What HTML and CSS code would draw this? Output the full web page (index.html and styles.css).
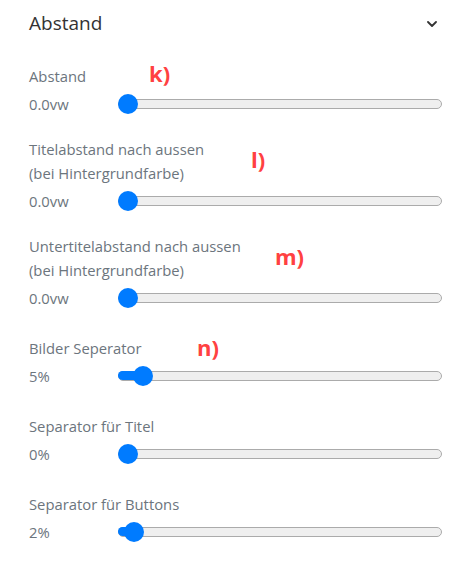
FILE: index.html
```html
<!DOCTYPE html>
<html lang="de">
<head>
<meta charset="utf-8">
<title>Abstand</title>
<link rel="stylesheet" href="styles.css">
</head>
<body>
<section class="panel">
  <header class="panel-header">
    <h2 class="panel-title">Abstand</h2>
    <svg class="chevron" viewBox="0 0 10 6" width="10" height="6"><polyline points="1,1 5,5 9,1" fill="none" stroke="#333" stroke-width="1.8" stroke-linecap="round" stroke-linejoin="round"/></svg>
  </header>
  <div class="groups">
    <div class="group">
      <div class="label">Abstand</div>
      <div class="row">
        <span class="value">0.0vw</span>
        <div class="slider"><div class="track"></div><div class="thumb" style="left:0px"></div></div>
      </div>
      <span class="mark mark-k">k)</span>
    </div>
    <div class="group">
      <div class="label">Titelabstand nach aussen<br>(bei Hintergrundfarbe)</div>
      <div class="row">
        <span class="value">0.0vw</span>
        <div class="slider"><div class="track"></div><div class="thumb" style="left:0px"></div></div>
      </div>
      <span class="mark mark-l">l)</span>
    </div>
    <div class="group">
      <div class="label">Untertitelabstand nach aussen<br>(bei Hintergrundfarbe)</div>
      <div class="row">
        <span class="value">0.0vw</span>
        <div class="slider"><div class="track"></div><div class="thumb" style="left:0px"></div></div>
      </div>
      <span class="mark mark-m">m)</span>
    </div>
    <div class="group group--spaced">
      <div class="label">Bilder Seperator</div>
      <div class="row">
        <span class="value">5%</span>
        <div class="slider"><div class="track"></div><div class="fill" style="width:25px"></div><div class="thumb" style="left:15px"></div></div>
      </div>
      <span class="mark mark-n">n)</span>
    </div>
    <div class="group group--spaced">
      <div class="label">Separator für Titel</div>
      <div class="row">
        <span class="value">0%</span>
        <div class="slider"><div class="track"></div><div class="thumb" style="left:0px"></div></div>
      </div>
    </div>
    <div class="group group--spaced">
      <div class="label">Separator für Buttons</div>
      <div class="row">
        <span class="value">2%</span>
        <div class="slider"><div class="track"></div><div class="fill" style="width:16px"></div><div class="thumb" style="left:6px"></div></div>
      </div>
    </div>
  </div>
</section>
</body>
</html>
```

FILE: styles.css
```css
body {
  margin: 0;
  background: #fff;
  font-family: "Open Sans", "Noto Sans", sans-serif;
}

.panel {
  padding: 8px 23px 0 29px;
}

.panel-header {
  display: flex;
  justify-content: space-between;
  align-items: center;
  height: 30px;
}

.panel-title {
  margin: 0;
  font-size: 19px;
  font-weight: 400;
  line-height: 30px;
  color: #333;
}

.chevron {
  margin-right: 5px;
  margin-top: 2px;
}

.groups {
  display: flex;
  flex-direction: column;
  gap: 21px;
  margin-top: 26px;
}

.group {
  position: relative;
  display: flex;
  flex-direction: column;
  gap: 4px;
}

.group--spaced {
  margin-top: 5px;
}

.label {
  font-size: 14.8px;
  line-height: 24px;
  color: #6c757d;
}

.row {
  display: flex;
  align-items: center;
  height: 24px;
}

.value {
  flex: none;
  width: 89px;
  font-size: 14.8px;
  color: #6c757d;
}

.slider {
  position: relative;
  flex: 1;
  height: 20px;
  display: flex;
  align-items: center;
}

.track {
  flex: 1;
  box-sizing: border-box;
  height: 10px;
  border: 1px solid #ababab;
  border-radius: 5px;
  background: #efefef;
}

.fill {
  position: absolute;
  left: 0;
  top: 5px;
  height: 9px;
  border-radius: 5px;
  background: #007bff;
}

.thumb {
  position: absolute;
  top: 0;
  width: 20px;
  height: 20px;
  border-radius: 50%;
  background: #007bff;
}

.mark {
  position: absolute;
  font-size: 22px;
  font-weight: 700;
  line-height: 22px;
  color: #ff4141;
}

.mark-k { left: 120px; top: -2px; }
.mark-l { left: 222px; top: 11px; }
.mark-m { left: 246px; top: 11px; }
.mark-n { left: 168px; top: 0; }
```
